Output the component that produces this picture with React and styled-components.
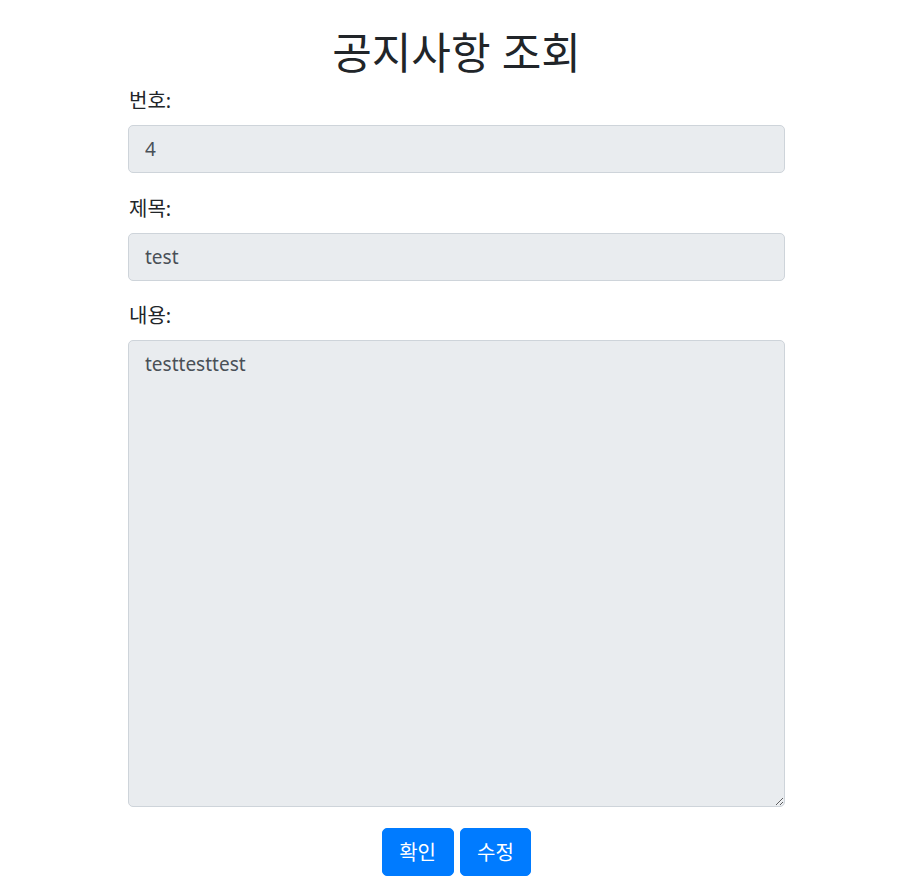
import React from 'react';
import styled, { createGlobalStyle } from 'styled-components';

const GlobalStyle = createGlobalStyle`
  body {
    margin: 0;
    background: #fff;
    color: #212529;
    font-family: 'Noto Sans', 'Noto Sans CJK KR', sans-serif;
  }
`;

const Page = styled.div`
  padding: 29px 0 16px;
`;

const Container = styled.div`
  width: 657px;
  margin-left: 128px;
`;

const Title = styled.h1`
  margin: 0 0 9px;
  font-size: 43px;
  line-height: 48px;
  font-weight: 400;
  text-align: center;
  color: #212529;
`;

const Group = styled.div`
  display: flex;
  flex-direction: column;
  margin-bottom: 20.5px;
`;

const Label = styled.label`
  font-size: 20px;
  line-height: 30px;
  margin-bottom: 9px;
  padding-left: 1px;
  color: #212529;
`;

const Field = styled.input`
  box-sizing: border-box;
  height: 48px;
  padding: 8px 16px;
  font-family: inherit;
  font-size: 19px;
  line-height: 1.5;
  color: #495057;
  background: #e9ecef;
  border: 1px solid #ced4da;
  border-radius: 5px;
  outline: none;
`;

const Area = styled.textarea`
  box-sizing: border-box;
  height: 467px;
  padding: 9px 16px;
  font-family: inherit;
  font-size: 19px;
  line-height: 1.5;
  color: #495057;
  background: #e9ecef;
  border: 1px solid #ced4da;
  border-radius: 5px;
  outline: none;
  resize: vertical;
`;

const Actions = styled.div`
  display: flex;
  justify-content: center;
  gap: 6px;
  margin-top: 1px;
`;

const Button = styled.button`
  box-sizing: border-box;
  height: 48px;
  padding: 0 16.5px;
  font-family: inherit;
  font-size: 20px;
  color: #fff;
  background: #007bff;
  border: 1px solid #007bff;
  border-radius: 5px;
  cursor: pointer;
`;

export default function App() {
  return (
    <Page>
      <GlobalStyle />
      <Container>
        <Title>공지사항 조회</Title>
        <Group>
          <Label htmlFor="no">번호:</Label>
          <Field id="no" value="4" readOnly />
        </Group>
        <Group>
          <Label htmlFor="title">제목:</Label>
          <Field id="title" value="test" readOnly />
        </Group>
        <Group>
          <Label htmlFor="body">내용:</Label>
          <Area id="body" value="testtesttest" readOnly />
        </Group>
        <Actions>
          <Button type="button">확인</Button>
          <Button type="button">수정</Button>
        </Actions>
      </Container>
    </Page>
  );
}
